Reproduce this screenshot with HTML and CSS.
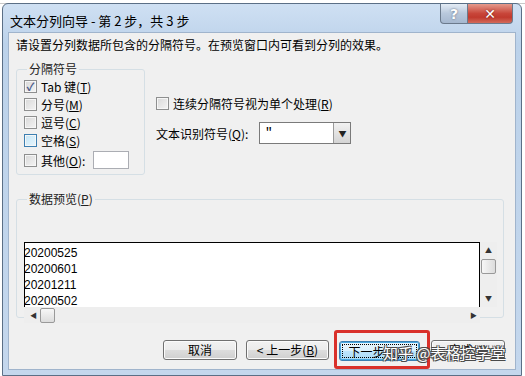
FILE: index.html
```html
<!DOCTYPE html>
<html lang="zh-CN">
<head>
    <meta charset="UTF-8">
    <title>文本分列向导</title>
    <link rel="stylesheet" href="styles.css">
</head>
<body>
    <div class="sheet-strip"></div>
    <div class="window">
        <div class="titlebar">
            <span class="title">文本分列向导 - 第 2 步，共 3 步</span>
            <div class="caption-buttons">
                <div class="cap-btn help">?</div>
                <div class="cap-btn close">✕</div>
            </div>
        </div>
        <div class="client">
            <div class="hint">请设置分列数据所包含的分隔符号。在预览窗口内可看到分列的效果。</div>

            <div class="top-row">
                <fieldset class="group delims">
                    <legend>分隔符号</legend>
                    <label class="check-row"><span class="box checked">✓</span>Tab 键(<u>T</u>)</label>
                    <label class="check-row"><span class="box"></span>分号(<u>M</u>)</label>
                    <label class="check-row"><span class="box"></span>逗号(<u>C</u>)</label>
                    <label class="check-row"><span class="box hot"></span>空格(<u>S</u>)</label>
                    <label class="check-row"><span class="box"></span>其他(<u>O</u>):<span class="other-input"></span></label>
                </fieldset>

                <div class="options">
                    <label class="check-row"><span class="box"></span>连续分隔符号视为单个处理(<u>R</u>)</label>
                    <div class="qualifier">
                        <span>文本识别符号(<u>Q</u>):</span>
                        <div class="combo">
                            <span class="combo-value">"</span>
                            <span class="combo-drop">▼</span>
                        </div>
                    </div>
                </div>
            </div>

            <fieldset class="group preview">
                <legend>数据预览(<u>P</u>)</legend>
                <div class="preview-grid">
                    <div class="preview-text">
                        <div>20200525</div>
                        <div>20200601</div>
                        <div>20201211</div>
                        <div>20200502</div>
                    </div>
                    <div class="vscroll">
                        <span class="arrow">▲</span>
                        <span class="thumb"></span>
                        <span class="arrow">▼</span>
                    </div>
                    <div class="hscroll">
                        <span class="arrow">◀</span>
                        <span class="thumb"></span>
                        <span class="spacer"></span>
                        <span class="arrow">▶</span>
                    </div>
                </div>
            </fieldset>

            <div class="buttons">
                <button>取消</button>
                <button>&lt; 上一步(<u>B</u>)</button>
                <div class="highlight">
                    <button class="default">下一步(<u>N</u>) &gt;</button>
                </div>
                <button>完成(<u>F</u>)</button>
                <div class="watermark">知乎 @表格控学堂</div>
            </div>
        </div>
    </div>
</body>
</html>
```

FILE: styles.css
```css
* {
    box-sizing: border-box;
}
body {
    margin: 0;
    width: 525px;
    height: 376px;
    overflow: hidden;
    background: #ffffff;
    font-family: "Noto Sans CJK SC", "DejaVu Sans", sans-serif;
    font-size: 12px;
    color: #000;
}
u {
    text-decoration: underline;
}
.sheet-strip {
    height: 4px;
    background: #fff;
    border-bottom: 1px solid #c9c9c9;
}
.window {
    margin: -1px 3px 0 2px;
    height: 373px;
    background: linear-gradient(#cfe0f3, #bcd2ea 40px, #c4d7ed);
    border: 1px solid #5b6f86;
    border-radius: 6px 6px 0 0;
    padding: 0 5px 5px 5px;
    display: flex;
    flex-direction: column;
    position: relative;
}
.titlebar {
    height: 28px;
    display: flex;
    align-items: flex-start;
    justify-content: space-between;
}
.title {
    font-size: 13px;
    padding: 7px 0 0 2px;
    color: #000;
}
.caption-buttons {
    display: flex;
    margin-right: 3px;
}
.cap-btn {
    height: 20px;
    display: flex;
    align-items: center;
    justify-content: center;
    border: 1px solid #6b7a8c;
    border-top: none;
    font-weight: bold;
    color: #fff;
    font-family: "DejaVu Sans", sans-serif;
}
.help {
    width: 28px;
    border-radius: 0 0 0 4px;
    background: linear-gradient(#e4ecf5, #b8c8dc 50%, #a6b8cf);
    font-size: 14px;
    color: #fdfdfd;
    text-shadow: 0 0 2px #4a5a70;
}
.close {
    width: 45px;
    border-left: none;
    border-radius: 0 0 4px 0;
    background: linear-gradient(#e59a8c, #c8463a 50%, #c13a2e 70%, #d36a5a);
    font-size: 14px;
    text-shadow: 0 0 2px #6b1a12;
}
.client {
    flex: 1;
    background: #f0f0f0;
    border: 1px solid #a0b4cc;
    padding: 3px 0 0 7px;
    display: flex;
    flex-direction: column;
    position: relative;
}
.hint {
    line-height: 18px;
}
.group {
    margin: 0;
    border: 1px solid #d5dfe5;
    border-radius: 3px;
    padding: 0;
}
.group legend {
    padding: 0 2px 0 2px;
    margin-left: 3px;
    line-height: 16px;
    color: #222;
}
.top-row {
    display: flex;
    margin-top: 7px;
    height: 115px;
}
.delims {
    width: 129px;
    height: 114px;
    padding: 0 0 0 7px;
}
.check-row {
    display: flex;
    align-items: center;
    height: 18px;
    white-space: nowrap;
}
.delims .check-row:last-child {
    margin-top: 2px;
}
.box {
    width: 13px;
    height: 13px;
    border: 1px solid #8e8f8f;
    background: linear-gradient(135deg, #d8d8d8, #f4f4f4);
    box-shadow: inset 0 0 0 1px #f6f6f6;
    margin-right: 4px;
    display: inline-flex;
    align-items: center;
    justify-content: center;
    font-size: 11px;
    font-weight: bold;
    color: #4a5a8a;
    line-height: 1;
}
.box.hot {
    border-color: #3c7fb1;
    background: linear-gradient(135deg, #c4e5f6, #e8f6fd);
}
.other-input {
    width: 36px;
    height: 18px;
    margin-left: 8px;
    background: #fff;
    border: 1px solid #abadb3;
}
.options {
    padding: 33px 0 0 11px;
}
.qualifier {
    display: flex;
    align-items: center;
    margin-top: 10px;
}
.combo {
    margin-left: 11px;
    width: 92px;
    height: 22px;
    border: 1px solid #7a7a7a;
    background: #fff;
    display: flex;
    justify-content: space-between;
}
.combo-value {
    padding: 0 0 0 5px;
    font-size: 14px;
    line-height: 20px;
}
.combo-drop {
    width: 17px;
    border-left: 1px solid #9a9a9a;
    background: linear-gradient(#f2f2f2, #d4d4d4);
    font-size: 8px;
    display: flex;
    align-items: center;
    justify-content: center;
    color: #222;
}
.preview {
    margin-top: 15px;
    width: 488px;
    height: 127px;
    padding: 35px 0 0 7px;
}
.preview-grid {
    display: grid;
    grid-template-columns: 456px 17px;
    grid-template-rows: 65px 16px;
}
.preview-text {
    background: #fff;
    border-top: 1px solid #000;
    border-left: 1px solid #000;
    border-right: 1px solid #000;
    overflow: hidden;
    font-family: "Liberation Sans", "DejaVu Sans", sans-serif;
    font-size: 12px;
    line-height: 16px;
    padding-top: 2px;
}
.preview-text div {
    margin-left: -1px;
}
.vscroll {
    display: flex;
    flex-direction: column;
    align-items: center;
    background: #eeeeee;
}
.vscroll .arrow {
    font-size: 7px;
    height: 17px;
    line-height: 17px;
    color: #333;
}
.vscroll .thumb {
    width: 15px;
    height: 15px;
    border: 1px solid #999;
    border-radius: 2px;
    background: linear-gradient(90deg, #f7f7f7, #dcdcdc);
}
.vscroll .arrow:last-child {
    margin-top: auto;
}
.hscroll {
    display: flex;
    align-items: center;
    background: #eeeeee;
    padding: 0 3px 0 6px;
}
.hscroll .arrow {
    font-size: 7px;
    color: #333;
}
.hscroll .thumb {
    width: 15px;
    height: 15px;
    margin-left: 3px;
    border: 1px solid #999;
    border-radius: 2px;
    background: linear-gradient(#f7f7f7, #dcdcdc);
}
.hscroll .spacer {
    flex: 1;
}
.buttons {
    display: flex;
    align-items: center;
    margin-top: 12px;
    padding-left: 147px;
    position: relative;
}
button {
    font-family: "Noto Sans CJK SC", "DejaVu Sans", sans-serif;
    font-size: 12px;
    height: 20px;
    width: 74px;
    padding: 0;
    border: 1px solid #707070;
    border-radius: 3px;
    background: linear-gradient(#f2f2f2 0%, #ebebeb 50%, #dddddd 51%, #cfcfcf 100%);
    box-shadow: inset 0 0 0 1px #fbfbfb;
    margin-right: 9px;
    color: #000;
}
.buttons > button:nth-child(2) {
    width: 83px;
}
.highlight {
    border: 3px solid #d9302a;
    border-radius: 3px;
    padding: 8px 7px 5px 2px;
    margin: 0 1px 0 -4px;
}
.highlight button {
    margin: 0;
    width: 81px;
    border-color: #3c7fb1;
    background: linear-gradient(#eaf6fd 0%, #d9f0fc 50%, #bee6fd 51%, #a7d9f5 100%);
    box-shadow: inset 0 0 0 1px #48a8e0;
    outline: 1px dotted #000;
    outline-offset: -4px;
}
.watermark {
    position: absolute;
    left: 367px;
    top: 12px;
    font-size: 15px;
    color: #fff;
    text-shadow: -1px -1px 0 #4a4a4a, 1px -1px 0 #4a4a4a, -1px 1px 0 #4a4a4a, 1px 1px 0 #4a4a4a;
    white-space: nowrap;
}
```
